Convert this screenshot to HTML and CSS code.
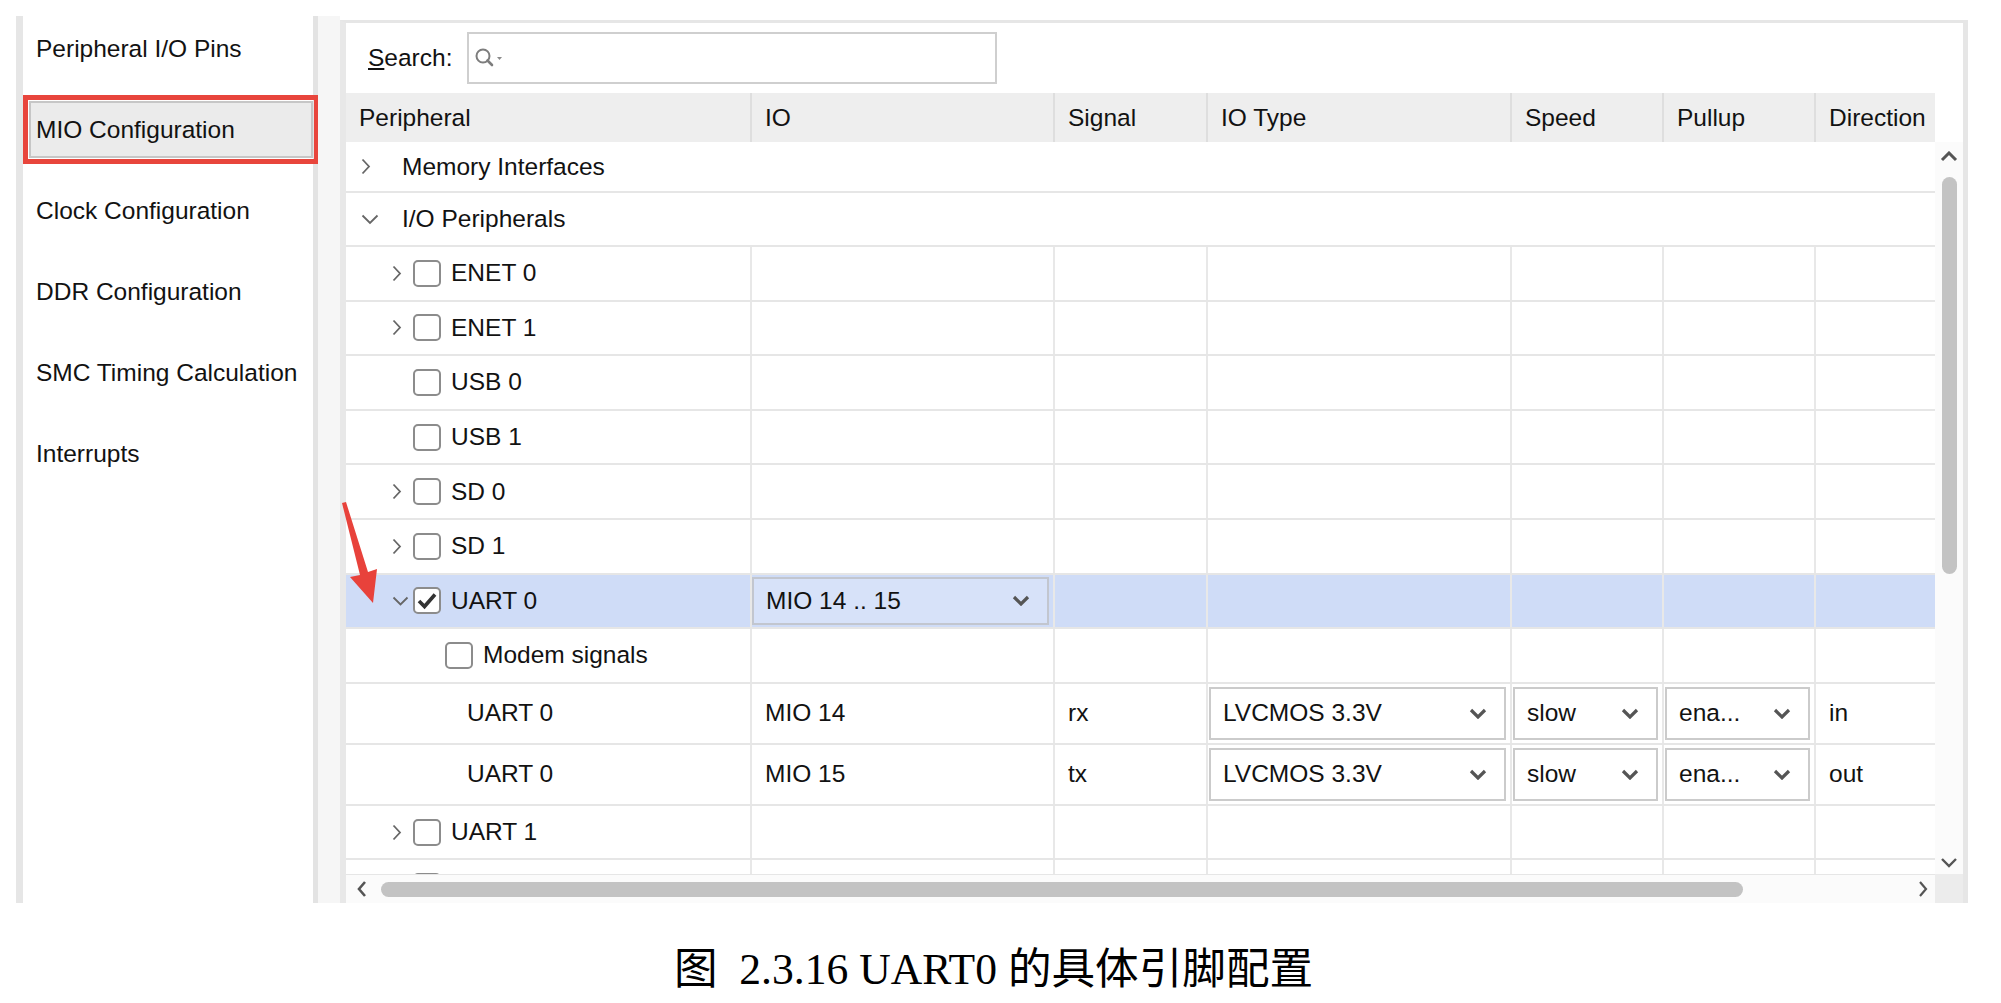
FILE: index.html
```html
<!DOCTYPE html>
<html lang="zh">
<head>
    <meta charset="UTF-8">
    <title>MIO Configuration</title>
    <link rel="stylesheet" href="styles.css">
</head>
<body>
    <div class="screen">
        <nav class="sidebar">
            <div class="nav-item">Peripheral I/O Pins</div>
            <div class="nav-item active">MIO Configuration</div>
            <div class="nav-item">Clock Configuration</div>
            <div class="nav-item">DDR Configuration</div>
            <div class="nav-item">SMC Timing Calculation</div>
            <div class="nav-item">Interrupts</div>
        </nav>

        <div class="divider"></div>

        <section class="main">
            <div class="search-bar">
                <label class="search-label"><u>S</u>earch:</label>
                <div class="search-box">
                    <svg width="30" height="22" viewBox="0 0 30 22">
                        <circle cx="8" cy="9" r="6.5" fill="none" stroke="#7d7d7d" stroke-width="2"/>
                        <line x1="12.5" y1="13.5" x2="17" y2="18" stroke="#7d7d7d" stroke-width="2.6" stroke-linecap="round"/>
                        <polygon points="22,10 27,10 24.5,13" fill="#8a8a8a"/>
                    </svg>
                </div>
            </div>

            <div class="grid-head">
                <div class="hcell">Peripheral</div>
                <div class="hcell">IO</div>
                <div class="hcell">Signal</div>
                <div class="hcell">IO Type</div>
                <div class="hcell">Speed</div>
                <div class="hcell">Pullup</div>
                <div class="hcell">Direction</div>
            </div>

            <div class="grid-body">
                <div class="rows">
                    <div class="row group mem">
                        <div class="cell tree">
                            <span class="twisty"><svg width="10" height="17" viewBox="0 0 10 17"><path d="M1.5 1.5 L8 8.5 L1.5 15.5" fill="none" stroke="#666" stroke-width="1.8"/></svg></span>
                            Memory Interfaces
                        </div>
                    </div>
                    <div class="row group io">
                        <div class="cell tree">
                            <span class="twisty"><svg width="18" height="11" viewBox="0 0 18 11"><path d="M1.5 1.5 L9 9 L16.5 1.5" fill="none" stroke="#666" stroke-width="1.8"/></svg></span>
                            I/O Peripherals
                        </div>
                    </div>

                    <div class="row">
                        <div class="cell tree l1"><span class="twisty"><svg width="10" height="17" viewBox="0 0 10 17"><path d="M1.5 1.5 L8 8.5 L1.5 15.5" fill="none" stroke="#666" stroke-width="1.8"/></svg></span><span class="check"></span>ENET 0</div>
                        <div class="cell"></div><div class="cell"></div><div class="cell"></div><div class="cell"></div><div class="cell"></div><div class="cell"></div>
                    </div>
                    <div class="row">
                        <div class="cell tree l1"><span class="twisty"><svg width="10" height="17" viewBox="0 0 10 17"><path d="M1.5 1.5 L8 8.5 L1.5 15.5" fill="none" stroke="#666" stroke-width="1.8"/></svg></span><span class="check"></span>ENET 1</div>
                        <div class="cell"></div><div class="cell"></div><div class="cell"></div><div class="cell"></div><div class="cell"></div><div class="cell"></div>
                    </div>
                    <div class="row">
                        <div class="cell tree l1"><span class="twisty"></span><span class="check"></span>USB 0</div>
                        <div class="cell"></div><div class="cell"></div><div class="cell"></div><div class="cell"></div><div class="cell"></div><div class="cell"></div>
                    </div>
                    <div class="row">
                        <div class="cell tree l1"><span class="twisty"></span><span class="check"></span>USB 1</div>
                        <div class="cell"></div><div class="cell"></div><div class="cell"></div><div class="cell"></div><div class="cell"></div><div class="cell"></div>
                    </div>
                    <div class="row">
                        <div class="cell tree l1"><span class="twisty"><svg width="10" height="17" viewBox="0 0 10 17"><path d="M1.5 1.5 L8 8.5 L1.5 15.5" fill="none" stroke="#666" stroke-width="1.8"/></svg></span><span class="check"></span>SD 0</div>
                        <div class="cell"></div><div class="cell"></div><div class="cell"></div><div class="cell"></div><div class="cell"></div><div class="cell"></div>
                    </div>
                    <div class="row">
                        <div class="cell tree l1"><span class="twisty"><svg width="10" height="17" viewBox="0 0 10 17"><path d="M1.5 1.5 L8 8.5 L1.5 15.5" fill="none" stroke="#666" stroke-width="1.8"/></svg></span><span class="check"></span>SD 1</div>
                        <div class="cell"></div><div class="cell"></div><div class="cell"></div><div class="cell"></div><div class="cell"></div><div class="cell"></div>
                    </div>

                    <div class="row selected">
                        <div class="cell tree l1">
                            <span class="twisty"><svg width="17" height="10" viewBox="0 0 17 10"><path d="M1.5 1.5 L8.5 8.5 L15.5 1.5" fill="none" stroke="#666" stroke-width="1.8"/></svg></span>
                            <span class="check"><svg width="22" height="20" viewBox="0 0 22 20"><path d="M3 10 L8.5 15.5 L19 3.5" fill="none" stroke="#333" stroke-width="3.6"/></svg></span>UART 0
                        </div>
                        <div class="cell pick-wide">
                            <div class="select mio">MIO 14 .. 15<svg width="18" height="11" viewBox="0 0 18 11"><path d="M2 2 L9 9 L16 2" fill="none" stroke="#555" stroke-width="3.2"/></svg></div>
                        </div>
                        <div class="cell"></div><div class="cell"></div><div class="cell"></div><div class="cell"></div><div class="cell"></div>
                    </div>

                    <div class="row">
                        <div class="cell tree l2"><span class="check"></span>Modem signals</div>
                        <div class="cell"></div><div class="cell"></div><div class="cell"></div><div class="cell"></div><div class="cell"></div><div class="cell"></div>
                    </div>

                    <div class="row sig">
                        <div class="cell tree l3">UART 0</div>
                        <div class="cell">MIO 14</div>
                        <div class="cell">rx</div>
                        <div class="cell pick"><div class="select wide">LVCMOS 3.3V<svg width="18" height="11" viewBox="0 0 18 11"><path d="M2 2 L9 9 L16 2" fill="none" stroke="#555" stroke-width="3.2"/></svg></div></div>
                        <div class="cell pick"><div class="select narrow">slow<svg width="18" height="11" viewBox="0 0 18 11"><path d="M2 2 L9 9 L16 2" fill="none" stroke="#555" stroke-width="3.2"/></svg></div></div>
                        <div class="cell pick"><div class="select narrow">ena...<svg width="18" height="11" viewBox="0 0 18 11"><path d="M2 2 L9 9 L16 2" fill="none" stroke="#555" stroke-width="3.2"/></svg></div></div>
                        <div class="cell">in</div>
                    </div>
                    <div class="row sig">
                        <div class="cell tree l3">UART 0</div>
                        <div class="cell">MIO 15</div>
                        <div class="cell">tx</div>
                        <div class="cell pick"><div class="select wide">LVCMOS 3.3V<svg width="18" height="11" viewBox="0 0 18 11"><path d="M2 2 L9 9 L16 2" fill="none" stroke="#555" stroke-width="3.2"/></svg></div></div>
                        <div class="cell pick"><div class="select narrow">slow<svg width="18" height="11" viewBox="0 0 18 11"><path d="M2 2 L9 9 L16 2" fill="none" stroke="#555" stroke-width="3.2"/></svg></div></div>
                        <div class="cell pick"><div class="select narrow">ena...<svg width="18" height="11" viewBox="0 0 18 11"><path d="M2 2 L9 9 L16 2" fill="none" stroke="#555" stroke-width="3.2"/></svg></div></div>
                        <div class="cell">out</div>
                    </div>

                    <div class="row">
                        <div class="cell tree l1"><span class="twisty"><svg width="10" height="17" viewBox="0 0 10 17"><path d="M1.5 1.5 L8 8.5 L1.5 15.5" fill="none" stroke="#666" stroke-width="1.8"/></svg></span><span class="check"></span>UART 1</div>
                        <div class="cell"></div><div class="cell"></div><div class="cell"></div><div class="cell"></div><div class="cell"></div><div class="cell"></div>
                    </div>
                    <!-- next row, only its top edge is scrolled into view -->
                    <div class="row">
                        <div class="cell tree l1"><span class="twisty"></span><span class="check"></span></div>
                        <div class="cell"></div><div class="cell"></div><div class="cell"></div><div class="cell"></div><div class="cell"></div><div class="cell"></div>
                    </div>
                </div>

                <div class="vscroll">
                    <svg class="arrow-up" width="18" height="11" viewBox="0 0 18 11"><path d="M2 9 L9 2 L16 9" fill="none" stroke="#555" stroke-width="3"/></svg>
                    <div class="vthumb"></div>
                    <div class="spacer"></div>
                    <svg class="arrow-down" width="18" height="11" viewBox="0 0 18 11"><path d="M2 2 L9 9 L16 2" fill="none" stroke="#555" stroke-width="2.4"/></svg>
                </div>
            </div>

            <div class="hscroll-bar">
                <div class="hscroll">
                    <svg width="10" height="18" viewBox="0 0 10 18"><path d="M8 2 L2 9 L8 16" fill="none" stroke="#555" stroke-width="2.6"/></svg>
                    <div class="hthumb"></div>
                    <div class="spacer"></div>
                    <svg width="10" height="18" viewBox="0 0 10 18"><path d="M2 2 L8 9 L2 16" fill="none" stroke="#555" stroke-width="2.2"/></svg>
                </div>
                <div class="corner"></div>
            </div>
        </section>
    </div>

    <p class="caption">图  2.3.16 UART0 的具体引脚配置</p>

    <svg class="red-arrow" width="48" height="110" viewBox="0 0 48 110">
        <polygon points="6,5 10,4 32,74 41,71 37,105 14,79 24,77" fill="#e8423b"/>
    </svg>
</body>
</html>
```

FILE: styles.css
```css
* {
    box-sizing: border-box;
}

body {
    margin: 0;
    background-color: #fff;
    font-family: "Liberation Sans", Arial, sans-serif;
    color: #121212;
    position: relative;
}

.screen {
    display: flex;
    height: 887px;
    margin: 16px 0 0 16px;
}

/* left navigation */
.sidebar {
    width: 302px;
    border-left: 7px solid #e6e6e6;
    border-right: 5px solid #e3e3e3;
    padding: 4px 0 0 6px;
    background-color: #fff;
}

.nav-item {
    height: 57px;
    display: flex;
    align-items: center;
    padding-left: 7px;
    margin-bottom: 24px;
    font-size: 24.5px;
    white-space: nowrap;
}

.nav-item.active {
    background-color: #ebebeb;
    border: 2px solid #c6c6c6;
    padding-left: 5px;
    outline: 5px solid #e8453c;
    outline-offset: 1px;
}

.divider {
    width: 22px;
    background-color: #f6f6f6;
}

/* main panel */
.main {
    width: 1628px;
    margin-top: 4px;
    border-top: 3px solid #e6e6e6;
    border-left: 6px solid #e8e8e8;
    border-right: 5px solid #e6e6e6;
    display: flex;
    flex-direction: column;
    background-color: #fff;
}

.search-bar {
    height: 70px;
    display: flex;
    align-items: center;
    padding-left: 22px;
}

.search-label {
    width: 99px;
    font-size: 24.5px;
}

.search-box {
    width: 530px;
    height: 52px;
    border: 2px solid #cfcfcf;
    display: flex;
    align-items: center;
    padding-left: 6px;
    background-color: #fff;
}

.grid-head,
.row {
    display: grid;
    grid-template-columns: 404px 303px 153px 304px 152px 152px 121px;
    width: 1589px;
}

.grid-head {
    height: 49px;
    background-color: #eeeeee;
}

.hcell {
    display: flex;
    align-items: center;
    padding-left: 13px;
    font-size: 24.5px;
}

.hcell + .hcell {
    border-left: 2px solid #dedede;
}

.grid-body {
    display: flex;
    height: 732px;
}

.rows {
    width: 1589px;
    overflow: hidden;
}

.row {
    height: 54.6px;
    border-bottom: 2px solid #e6e6e6;
}

.row.group {
    grid-template-columns: 1fr;
}

.row.mem {
    height: 51px;
}

.row.io {
    height: 54px;
}

.row.sig {
    height: 61px;
}

.row.selected {
    background-color: #cfdcf7;
}

.cell {
    display: flex;
    align-items: center;
    padding-left: 13px;
    font-size: 24.5px;
    white-space: nowrap;
    min-width: 0;
}

.cell + .cell {
    border-left: 2px solid #e8e8e8;
}

.cell.tree {
    padding-left: 15px;
}

.cell.tree.l1 {
    padding-left: 46px;
}

.cell.tree.l2 {
    padding-left: 99px;
}

.cell.tree.l3 {
    padding-left: 121px;
}

.cell.pick {
    padding-left: 1px;
}

.cell.pick-wide {
    padding-left: 0;
}

.twisty {
    width: 41px;
    flex: none;
    display: flex;
    align-items: center;
}

.l1 .twisty {
    width: 21px;
}

.check {
    width: 28px;
    height: 27px;
    flex: none;
    border: 2px solid #8c8c8c;
    border-radius: 5px;
    background-color: #fff;
    margin-right: 10px;
    display: flex;
    align-items: center;
    justify-content: center;
}

.select {
    display: flex;
    align-items: center;
    justify-content: space-between;
    height: 53px;
    padding: 0 17px 0 12px;
    border: 2px solid #cbcbcb;
    background-color: #fff;
}

.select.wide {
    width: 297px;
}

.select.narrow {
    width: 145px;
}

.select.mio {
    width: 297px;
    height: 48px;
    background-color: #d7e2f9;
    border-color: #c2c6cf;
}

/* scrollbars */
.vscroll {
    width: 28px;
    display: flex;
    flex-direction: column;
    align-items: center;
    background-color: #fbfbfb;
}

.arrow-up {
    margin-top: 9px;
}

.vthumb {
    width: 15px;
    height: 397px;
    margin-top: 15px;
    border-radius: 8px;
    background-color: #c3c3c3;
}

.arrow-down {
    margin-bottom: 6px;
}

.spacer {
    flex: 1;
}

.hscroll-bar {
    display: flex;
    height: 29px;
}

.hscroll {
    width: 1589px;
    display: flex;
    align-items: center;
    padding: 0 7px 0 11px;
    border-top: 1px solid #e6e6e6;
    background-color: #fbfbfb;
}

.hthumb {
    width: 1362px;
    height: 15px;
    margin-left: 14px;
    border-radius: 8px;
    background-color: #c3c3c3;
}

.corner {
    flex: 1;
    background-color: #ececec;
}

.caption {
    margin: 45px 0 0;
    padding-right: 14px;
    text-align: center;
    font-family: "Liberation Serif", "Noto Sans CJK SC", serif;
    font-size: 43.6px;
    line-height: 43px;
    white-space: pre;
    color: #000;
}

.red-arrow {
    position: absolute;
    left: 336px;
    top: 498px;
}
```
